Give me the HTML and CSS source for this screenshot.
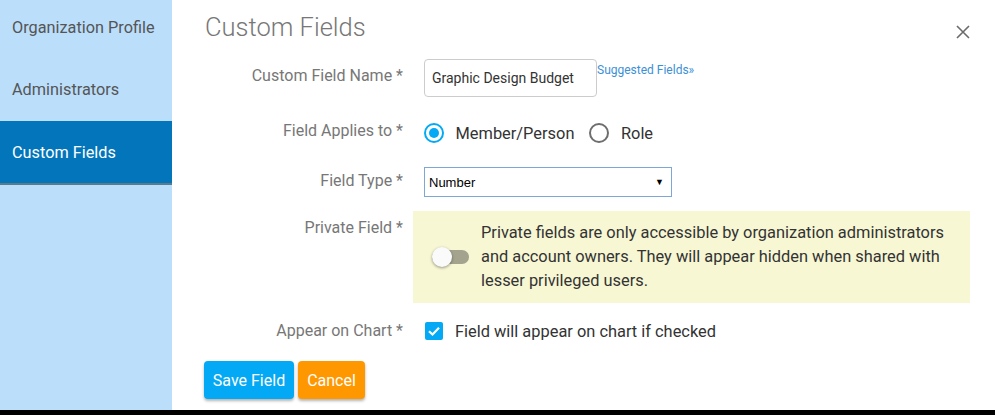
FILE: index.html
```html
<!DOCTYPE html>
<html lang="en">
<head>
<meta charset="utf-8">
<title>Custom Fields</title>
<link rel="stylesheet" href="styles.css">
</head>
<body>
<div class="page">
  <nav class="sidebar">
    <a class="nav-item">Organization Profile</a>
    <a class="nav-item">Administrators</a>
    <a class="nav-item active">Custom Fields</a>
  </nav>
  <main class="main">
    <header class="header">
      <h1 class="title">Custom Fields</h1>
      <button class="close" aria-label="Close">
        <svg width="14" height="14" viewBox="0 0 14 14"><path d="M1 1 L13 13 M13 1 L1 13" stroke="#6b6b6b" stroke-width="1.6" fill="none"/></svg>
      </button>
    </header>
    <div class="form">
      <div class="row row-name">
        <div class="label">Custom Field Name *</div>
        <div class="control">
          <div class="text-input">Graphic Design Budget</div>
          <a class="suggest">Suggested Fields»</a>
        </div>
      </div>
      <div class="row row-applies">
        <div class="label">Field Applies to *</div>
        <div class="control radios">
          <span class="radio checked"></span><span class="opt">Member/Person</span>
          <span class="radio"></span><span class="opt">Role</span>
        </div>
      </div>
      <div class="row row-type">
        <div class="label">Field Type *</div>
        <div class="control">
          <div class="select"><span>Number</span><span class="arrow">▼</span></div>
        </div>
      </div>
      <div class="row row-private">
        <div class="label">Private Field *</div>
        <div class="notice">
          <div class="toggle"><span class="track"></span><span class="knob"></span></div>
          <p class="notice-text">Private fields are only accessible by organization administrators and account owners. They will appear hidden when shared with lesser privileged users.</p>
        </div>
      </div>
      <div class="row row-chart">
        <div class="label">Appear on Chart *</div>
        <div class="control">
          <span class="checkbox"><svg width="18" height="18" viewBox="0 0 18 18"><path d="M4 9.2 L7.5 12.5 L14 5.8" stroke="#fff" stroke-width="2.2" fill="none"/></svg></span>
          <span class="opt">Field will appear on chart if checked</span>
        </div>
      </div>
      <div class="actions">
        <button class="btn btn-save">Save Field</button>
        <button class="btn btn-cancel">Cancel</button>
      </div>
    </div>
  </main>
</div>
<div class="bottom-bar"></div>
</body>
</html>
```
FILE: styles.css
```css
* { box-sizing: border-box; }
html, body { margin: 0; padding: 0; }
body {
  font-family: Roboto, "Liberation Sans", sans-serif;
  background: #fff;
  width: 995px;
  height: 415px;
  overflow: hidden;
}
.page {
  display: flex;
  height: 410px;
}
.sidebar {
  width: 172px;
  flex: none;
  background: #bbdefb;
  display: flex;
  flex-direction: column;
}
.nav-item {
  display: flex;
  align-items: center;
  height: 61px;
  padding-left: 12px;
  font-size: 16.3px;
  color: #555;
}
.nav-item:first-child { height: 58px; padding-bottom: 3px; }
.nav-item:nth-child(2) { height: 63px; }
.nav-item.active {
  height: 64px;
  background: #0275bb;
  color: #fff;
  border-bottom: 2px solid #5b7a8c;
}
.main {
  flex: 1;
  padding-left: 33px;
  padding-right: 26px;
}
.header {
  display: flex;
  justify-content: space-between;
  align-items: flex-start;
  padding-top: 12px;
}
.title {
  margin: 0;
  font-size: 25.5px;
  font-weight: 300;
  line-height: 30px;
  color: #777;
}
.close {
  margin-top: 13px;
  border: 0;
  padding: 0;
  background: none;
  width: 14px;
  height: 14px;
  display: block;
}
.close svg { display: block; }
.form {
  display: flex;
  flex-direction: column;
  margin-top: 17px;
}
.row {
  display: flex;
}
.label {
  width: 198px;
  flex: none;
  text-align: right;
  font-size: 16px;
  line-height: 20px;
  color: #777;
  margin-right: 21px;
}
.control {
  display: flex;
  align-items: center;
}
.row-name { height: 38px; }
.row-name .label { padding-top: 7px; }
.row-name .control { align-items: flex-start; }
.text-input {
  width: 173px;
  height: 38px;
  border: 1px solid #ccc;
  border-radius: 4px;
  padding: 0 7px;
  font-size: 14px;
  line-height: 36px;
  color: #333;
}
.suggest {
  font-size: 12px;
  line-height: 15px;
  margin-top: 4px;
  color: #3d8fd6;
}
.row-applies { margin-top: 20px; height: 32px; }
.row-applies .label { padding-top: 4px; }
.radio {
  width: 20px;
  height: 20px;
  border-radius: 50%;
  border: 2px solid #6e6e6e;
  flex: none;
  margin-left: -0.5px;
  position: relative;
}
.radio.checked {
  border-color: #03a9f4;
}
.radio.checked::after {
  content: "";
  position: absolute;
  left: 3px;
  top: 3px;
  width: 10px;
  height: 10px;
  border-radius: 50%;
  background: #03a9f4;
}
.opt {
  font-size: 16.4px;
  color: #333;
  margin-left: 12px;
}
.radios .opt:nth-of-type(2) { margin-right: 15px; }
.row-type { margin-top: 18px; height: 30px; }
.row-type .label { padding-top: 4px; }
.select {
  width: 248px;
  height: 30px;
  border: 1px solid #7ea6d6;
  display: flex;
  align-items: center;
  justify-content: space-between;
  padding: 0 7px 0 4px;
  font-family: "Liberation Sans", Arial, sans-serif;
  font-size: 13px;
  color: #000;
}
.arrow { font-size: 9px; }
.row-private { margin-top: 14px; }
.row-private .label { padding-top: 7px; margin-right: 10px; }
.notice {
  width: 557px;
  height: 92px;
  background: #f7f7d4;
  display: flex;
  align-items: center;
  padding: 0 15px 0 19px;
}
.toggle {
  width: 37px;
  height: 20px;
  position: relative;
  flex: none;
  margin-right: 12px;
}
.track {
  position: absolute;
  left: 0;
  top: 3px;
  width: 37px;
  height: 14px;
  border-radius: 7px;
  background: #a3a38e;
}
.knob {
  position: absolute;
  left: 0;
  top: 0;
  width: 20px;
  height: 20px;
  border-radius: 50%;
  background: #fafafa;
  box-shadow: 0 1px 3px rgba(0,0,0,.4);
}
.notice-text {
  margin: 0;
  font-size: 16.4px;
  line-height: 24px;
  color: #333;
}
.row-chart { margin-top: 13px; height: 30px; }
.row-chart .label { padding-top: 5px; }
.checkbox {
  width: 18px;
  height: 18px;
  border-radius: 2px;
  background: #03a9f4;
  margin-left: 1px;
  flex: none;
}
.checkbox svg { display: block; }
.actions {
  display: flex;
  gap: 4px;
  margin-top: 15px;
  margin-left: -1px;
}
.btn {
  height: 38px;
  border: 0;
  border-radius: 4px;
  padding: 0;
  white-space: nowrap;
  font-family: Roboto, "Liberation Sans", sans-serif;
  font-size: 16px;
  color: #fff;
  box-shadow: 0 2px 3px rgba(0,0,0,.3);
}
.btn-save { background: #03a9f4; width: 90px; }
.btn-cancel { background: #ff9800; width: 67px; }
.bottom-bar {
  height: 5px;
  background: #000;
}
```
